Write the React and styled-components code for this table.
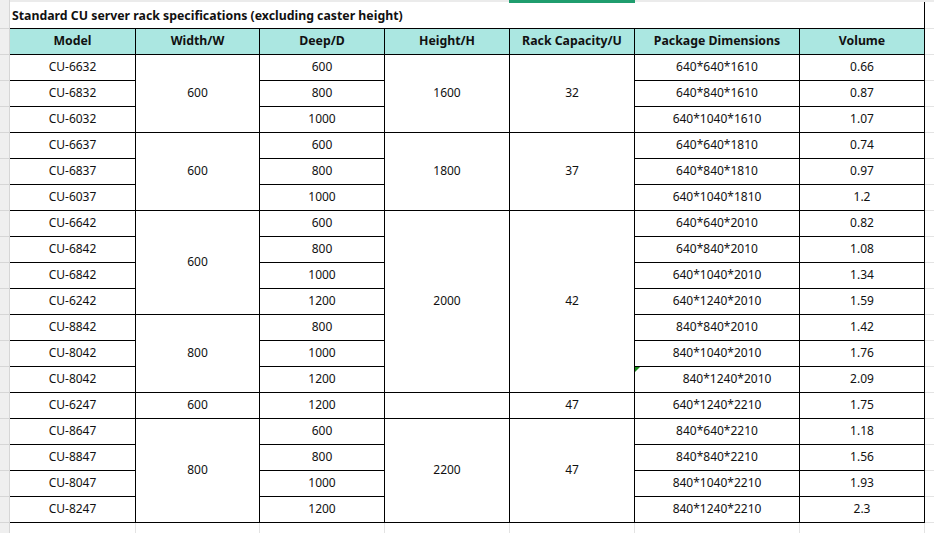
import React from 'react';
import styled, { createGlobalStyle } from 'styled-components';

const GlobalStyle = createGlobalStyle`
  html, body {
    margin: 0;
    padding: 0;
    background: #ffffff;
  }
  body {
    font-family: "Noto Sans", "Open Sans", Arial, sans-serif;
    color: #111;
  }
`;

const COLS = [126, 124, 125, 125, 125, 165, 125];

const Sheet = styled.div`
  position: relative;
  display: flex;
  width: 934px;
  height: 533px;
  overflow: hidden;
  background-color: #fff;
  background-image: repeating-linear-gradient(
    to bottom,
    transparent 0,
    transparent 25px,
    #e3e3e3 25px,
    #e3e3e3 26px
  );
  background-position: 0 3px;
`;

const Gutter = styled.div`
  flex: 0 0 9px;
  border-right: 1px solid #d6d6d6;
  background-color: #efefef;
  background-image: repeating-linear-gradient(
    to bottom,
    transparent 0,
    transparent 25px,
    #d6d6d6 25px,
    #d6d6d6 26px
  );
  background-position: 0 3px;
`;

const TopStrip = styled.div`
  position: absolute;
  left: 10px;
  top: 0;
  width: 924px;
  height: 2px;
  background: #ebebeb;
`;

const Selection = styled.div`
  position: absolute;
  left: 509px;
  top: 0;
  width: 126px;
  height: 3px;
  background: #1f9d6e;
`;

const Grid = styled.div`
  display: grid;
  grid-template-columns: ${COLS.map((w) => w + 'px').join(' ')};
  grid-template-rows: 29px 26px;
  grid-auto-rows: 26px;
  align-self: flex-start;
`;

const Cell = styled.div`
  box-sizing: border-box;
  display: flex;
  align-items: center;
  justify-content: center;
  border-right: 1px solid #000;
  border-bottom: 1px solid #000;
  padding-bottom: 1px;
  font-size: 12px;
  line-height: 1;
  white-space: nowrap;
  background: #fff;
  padding-left: ${(p) => (p.$indent ? '20px' : '0')};
  position: relative;
`;

const Title = styled(Cell)`
  grid-column: 1 / -1;
  justify-content: flex-start;
  padding-left: 2px;
  padding-top: 4px;
  padding-bottom: 0;
  font-size: 12.3px;
  font-weight: 700;
  background: transparent;
`;

const Head = styled(Cell)`
  background: #abe7e1;
  padding-bottom: 0;
  font-size: 12.3px;
  font-weight: 700;
`;

const Flag = styled.span`
  position: absolute;
  left: 0;
  top: 0;
  width: 0;
  height: 0;
  border-top: 5px solid #1a8a1a;
  border-right: 5px solid transparent;
`;

const Filler = styled.div`
  box-sizing: border-box;
  border-right: 1px solid #e3e3e3;
  height: 11px;
`;

const headers = [
  'Model',
  'Width/W',
  'Deep/D',
  'Height/H',
  'Rack Capacity/U',
  'Package Dimensions',
  'Volume',
];

const rows = [
  ['CU-6632', '600', '640*640*1610', '0.66'],
  ['CU-6832', '800', '640*840*1610', '0.87'],
  ['CU-6032', '1000', '640*1040*1610', '1.07'],
  ['CU-6637', '600', '640*640*1810', '0.74'],
  ['CU-6837', '800', '640*840*1810', '0.97'],
  ['CU-6037', '1000', '640*1040*1810', '1.2'],
  ['CU-6642', '600', '640*640*2010', '0.82'],
  ['CU-6842', '800', '640*840*2010', '1.08'],
  ['CU-6842', '1000', '640*1040*2010', '1.34'],
  ['CU-6242', '1200', '640*1240*2010', '1.59'],
  ['CU-8842', '800', '840*840*2010', '1.42'],
  ['CU-8042', '1000', '840*1040*2010', '1.76'],
  ['CU-8042', '1200', '840*1240*2010', '2.09'],
  ['CU-6247', '1200', '640*1240*2210', '1.75'],
  ['CU-8647', '600', '840*640*2210', '1.18'],
  ['CU-8847', '800', '840*840*2210', '1.56'],
  ['CU-8047', '1000', '840*1040*2210', '1.93'],
  ['CU-8247', '1200', '840*1240*2210', '2.3'],
];

// merged blocks: [first row index, span, value]
const widthGroups = [
  [0, 3, '600'],
  [3, 3, '600'],
  [6, 4, '600'],
  [10, 3, '800'],
  [13, 1, '600'],
  [14, 4, '800'],
];
const heightGroups = [
  [0, 3, '1600'],
  [3, 3, '1800'],
  [6, 7, '2000'],
  [13, 1, ''],
  [14, 4, '2200'],
];
const capacityGroups = [
  [0, 3, '32'],
  [3, 3, '37'],
  [6, 7, '42'],
  [13, 1, '47'],
  [14, 4, '47'],
];

const FIRST = 3; // first data grid row

function Merged({ groups, col }) {
  return groups.map(([start, span, value]) => (
    <Cell
      key={col + '-' + start}
      style={{
        gridColumn: col,
        gridRow: `${FIRST + start} / span ${span}`,
      }}
    >
      {value}
    </Cell>
  ));
}

export default function App() {
  return (
    <>
      <GlobalStyle />
      <Sheet>
        <Gutter />
        <Grid>
          <Title>Standard CU server rack specifications (excluding caster height)</Title>
          {headers.map((h) => (
            <Head key={h}>{h}</Head>
          ))}
          {rows.map((r, i) => (
            <React.Fragment key={i}>
              <Cell style={{ gridColumn: 1, gridRow: FIRST + i }}>{r[0]}</Cell>
              <Cell style={{ gridColumn: 3, gridRow: FIRST + i }}>{r[1]}</Cell>
              <Cell
                style={{ gridColumn: 6, gridRow: FIRST + i }}
                $indent={i === 12}
              >
                {i === 12 && <Flag />}
                {r[2]}
              </Cell>
              <Cell style={{ gridColumn: 7, gridRow: FIRST + i }}>{r[3]}</Cell>
            </React.Fragment>
          ))}
          <Merged groups={widthGroups} col={2} />
          <Merged groups={heightGroups} col={4} />
          <Merged groups={capacityGroups} col={5} />
          {COLS.map((w, i) => (
            <Filler key={'f' + i} style={{ gridColumn: i + 1, gridRow: FIRST + rows.length }} />
          ))}
        </Grid>
        <TopStrip />
        <Selection />
      </Sheet>
    </>
  );
}
